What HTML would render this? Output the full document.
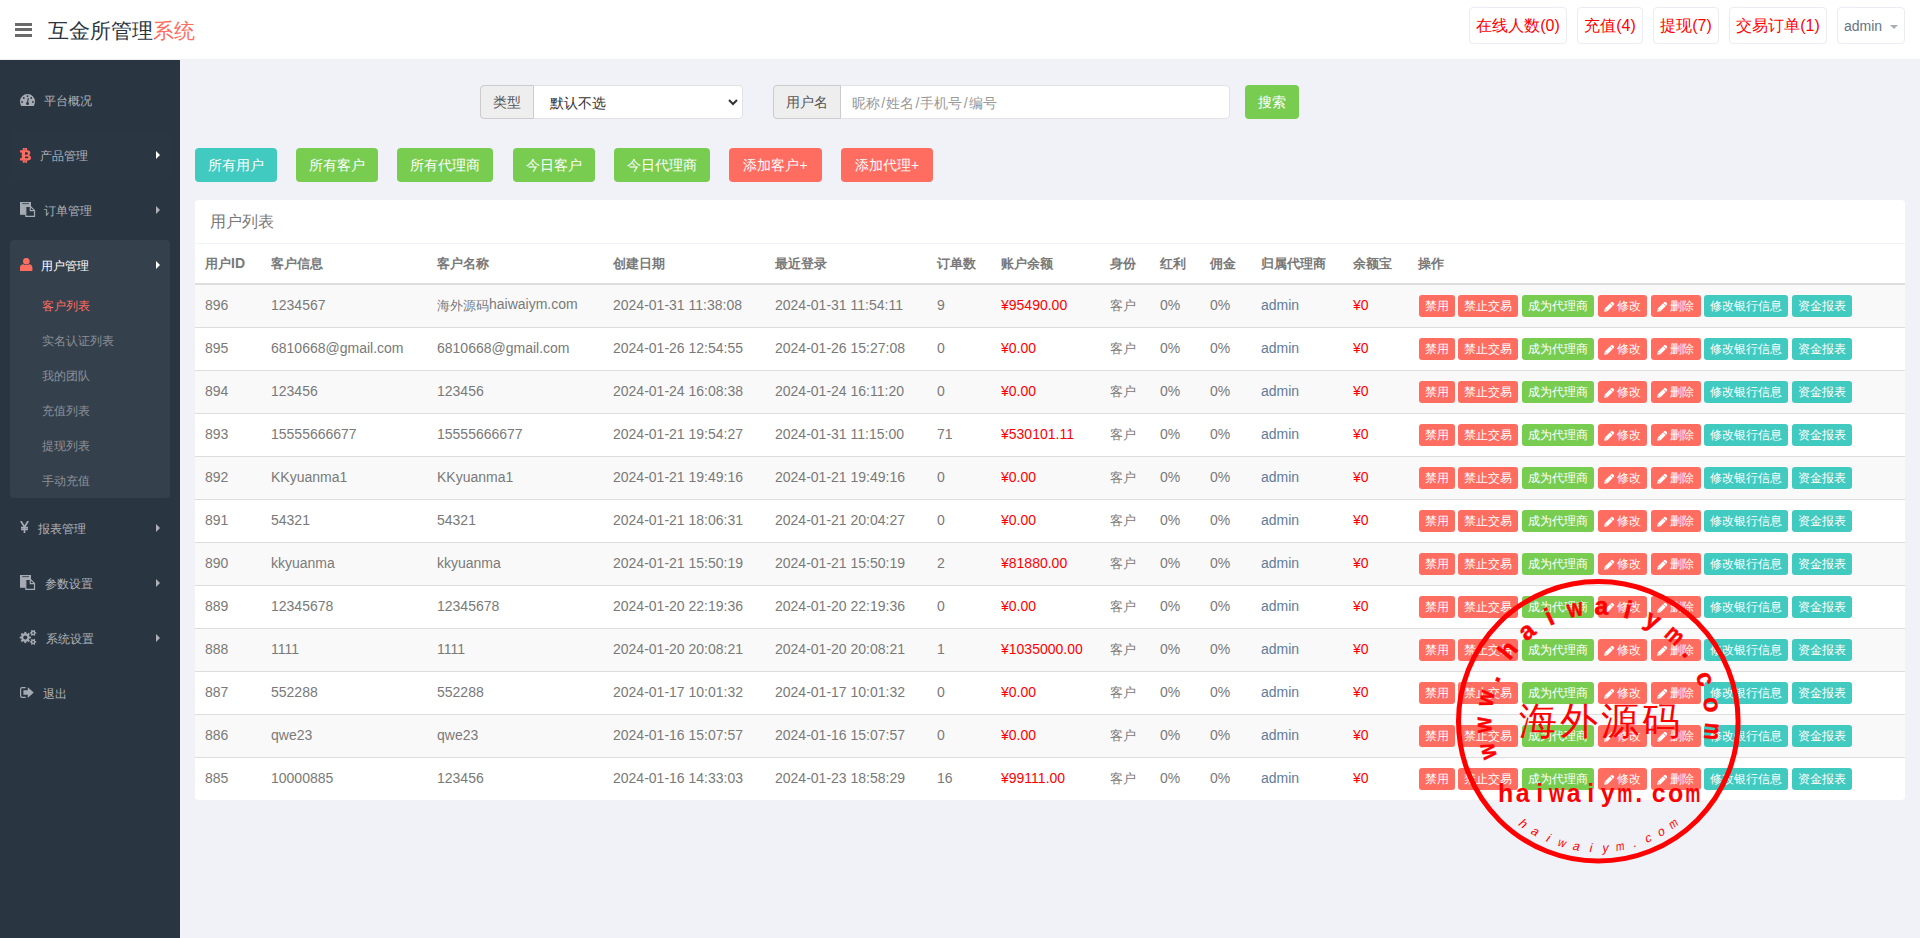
<!DOCTYPE html>
<html><head><meta charset="utf-8">
<style>
*{box-sizing:border-box;margin:0;padding:0}
html,body{width:1920px;height:938px;overflow:hidden}
body{font-family:"Liberation Sans",sans-serif;background:#f1f2f7;color:#797979;font-size:13px;position:relative}
.abs{position:absolute}
.sl{font-style:normal;padding:0 1px 0 1.3px}
/* header */
#hdr{position:absolute;left:0;top:0;width:1920px;height:60px;background:#fff;border-bottom:1px solid #eceef4}
#burger{position:absolute;left:15px;top:23px;width:17px;height:14px}
#burger i{position:absolute;left:0;width:17px;height:3px;background:#6a6a6a}
#logo{position:absolute;left:48px;top:17px;font-size:21px;line-height:28px;color:#2a3542;white-space:nowrap}
#logo span{color:#ff6c60}
.tb{position:absolute;top:7px;height:37px;border:1px solid #ebecf4;border-radius:4px;font-size:16px;line-height:35px;color:#ff0000;text-align:center;white-space:nowrap}
/* sidebar */
#side{position:absolute;left:0;top:60px;width:180px;height:878px;background:#2a3542}
.mi{position:absolute;left:0;width:180px;height:20px;font-size:12px;line-height:20px;color:#aeb2b7;white-space:nowrap}
.mi .t{position:absolute;top:1px}
.mi .ar{position:absolute;left:156px;top:6px;width:0;height:0;border-top:4px solid transparent;border-bottom:4px solid transparent;border-left:4px solid #aeb2b7}
#subbox{position:absolute;left:10px;top:180px;width:160px;height:258px;background:#35404d;border-radius:4px}
/* content */
.btn{position:absolute;height:34px;border-radius:4px;color:#fff;font-size:14px;line-height:34px;text-align:center;white-space:nowrap}
.teal{background:#41cac0}.green{background:#78cd51}.red{background:#ff6c60}
#panel{position:absolute;left:195px;top:200px;width:1710px;height:600px;background:#fff;border-radius:4px;overflow:hidden}
#ph{height:44px;border-bottom:1px solid #eff2f7;padding:0 15px;font-size:16px;line-height:43px;color:#797979}
table{border-collapse:collapse;table-layout:fixed;width:1710px}
th{height:40px;text-align:left;font-weight:bold;font-size:13px;color:#797979;padding:0 0 0 10px;border-bottom:2px solid #ddd;white-space:nowrap}
td{height:43px;padding:0 0 2px 10px;border-top:1px solid #ddd;font-size:14px;color:#797979;white-space:nowrap;vertical-align:middle}
tr.odd td{background:#f9f9f9}
.c{font-size:13px;position:relative;top:1px}
.rd{color:#ff0000}
.lk{color:#617c9b}
.xs{display:inline-block;height:22px;line-height:22px;padding:0 6px;border-radius:3px;color:#fff;font-size:12px;margin-right:4px;vertical-align:middle;position:relative;top:1px}
.ops{white-space:nowrap;font-size:0;padding-left:11px}
</style></head><body>
<div id="hdr">
  <div id="burger"><i style="top:0"></i><i style="top:5px"></i><i style="top:11px"></i></div>
  <div id="logo">互金所管理<span>系统</span></div>
  <div class="tb" style="left:1469px;width:98px">在线人数(0)</div>
  <div class="tb" style="left:1577px;width:66px">充值(4)</div>
  <div class="tb" style="left:1653px;width:66px">提现(7)</div>
  <div class="tb" style="left:1729px;width:98px">交易订单(1)</div>
  <div class="tb" style="left:1837px;width:68px;color:#667487;font-size:14px;line-height:37px">admin <span style="display:inline-block;width:0;height:0;border-left:4px solid transparent;border-right:4px solid transparent;border-top:4px solid #a8adb8;vertical-align:middle;margin-left:4px"></span></div>
</div>
<div id="side">
<div id="subbox"></div>
<svg class="abs" style="left:20px;top:34px" width="15" height="12" viewBox="0 0 15 12"><path d="M7.5 0A7.5 7.5 0 0 0 0 7.5C0 9 .4 10.6 1.2 12H13.8C14.6 10.6 15 9 15 7.5A7.5 7.5 0 0 0 7.5 0Z" fill="#a6abb3"/><g fill="#2a3542"><circle cx="7.5" cy="2.2" r=".9"/><circle cx="3.8" cy="4" r=".9"/><circle cx="11.2" cy="4" r=".9"/><circle cx="2.1" cy="7.9" r=".9"/><circle cx="12.9" cy="7.9" r=".9"/><circle cx="7.5" cy="9.4" r="1.5"/></g><path d="M7.3 9.4L8.4 4.2" stroke="#2a3542" stroke-width="1.1"/></svg>
<div class="mi" style="top:30px"><span class="t" style="left:44px">平台概况</span></div>

<div class="abs" style="left:10px;top:70px;width:160px;height:50px;background:#2b3643;border-radius:3px"></div>
<svg class="abs" style="left:20px;top:88px" width="11" height="15" viewBox="0 0 11 15"><path fill="#ff6c60" fill-rule="evenodd" d="M0 2.2H7.5C9.5 2.2 10.3 3.3 10.3 4.8C10.3 6 9.7 6.8 9 7.3C10.3 7.7 11 8.6 11 10C11 11.6 9.8 12.5 7.8 12.5H0V10.3H1.8V4.4H0Z M5 4.3V6.7H6.8C7.5 6.7 7.9 6.2 7.9 5.5C7.9 4.8 7.5 4.3 6.8 4.3Z M5 8.6V10.3H7.3C8 10.3 8.4 9.9 8.4 9.4C8.4 8.9 8 8.6 7.3 8.6Z"/><path fill="#ff6c60" d="M2.8 0H4.8V2.4H2.8Z M5.2 0H7.1V2.4H5.2Z M2.8 12.3H4.8V14.7H2.8Z M5.2 12.3H7.1V14.7H5.2Z"/></svg>
<div class="mi" style="top:85px;color:#aeb2b7"><span class="t" style="left:40px">产品管理</span><i class="ar" style="border-left-color:#fff"></i></div>

<svg class="abs" style="left:20px;top:142px" width="16" height="16" viewBox="0 0 16 16"><path d="M0 0H11V12.8H0Z" fill="#a6abb3"/><path d="M2.2 1.3H9V2.1H2.2Z" fill="#2a3542"/><path d="M5.8 4.5H10.6L14.5 8.4V14.4H5.8Z" fill="#2a3542" stroke="#a6abb3" stroke-width="1.2"/><path d="M10.3 4.5V8.7H14.5" fill="none" stroke="#a6abb3" stroke-width="1.2"/></svg>
<div class="mi" style="top:140px"><span class="t" style="left:44px">订单管理</span><i class="ar"></i></div>

<svg class="abs" style="left:20px;top:198px" width="13" height="14" viewBox="0 0 13 14"><circle cx="6.3" cy="3.2" r="3.3" fill="#ff6c60"/><path d="M0 13V9.6C0 7.6 1.5 6.4 3.3 6.2C4.2 6.8 5.2 7.1 6.3 7.1C7.4 7.1 8.4 6.8 9.3 6.2C11 6.4 12.4 7.6 12.4 9.6V13Z" fill="#ff6c60"/></svg>
<div class="mi" style="top:195px;color:#fff"><span class="t" style="left:41px">用户管理</span><i class="ar" style="border-left-color:#fff"></i></div>

<div class="mi" style="top:235px;color:#ff6c60"><span class="t" style="left:42px">客户列表</span></div>
<div class="mi" style="top:270px;color:#8b9098"><span class="t" style="left:42px">实名认证列表</span></div>
<div class="mi" style="top:305px;color:#8b9098"><span class="t" style="left:42px">我的团队</span></div>
<div class="mi" style="top:340px;color:#8b9098"><span class="t" style="left:42px">充值列表</span></div>
<div class="mi" style="top:375px;color:#8b9098"><span class="t" style="left:42px">提现列表</span></div>
<div class="mi" style="top:410px;color:#8b9098"><span class="t" style="left:42px">手动充值</span></div>

<svg class="abs" style="left:20px;top:461px" width="9" height="12" viewBox="0 0 9 12"><path d="M.8 0L4.5 6L8.2 0M4.5 6V12M1 6.6H8M1 8.5H8" fill="none" stroke="#a6abb3" stroke-width="1.7"/></svg>
<div class="mi" style="top:458px"><span class="t" style="left:38px">报表管理</span><i class="ar"></i></div>

<svg class="abs" style="left:20px;top:515px" width="16" height="16" viewBox="0 0 16 16"><path d="M0 0H11V12.8H0Z" fill="#a6abb3"/><path d="M2.2 1.3H9V2.1H2.2Z" fill="#2a3542"/><path d="M5.8 4.5H10.6L14.5 8.4V14.4H5.8Z" fill="#2a3542" stroke="#a6abb3" stroke-width="1.2"/><path d="M10.3 4.5V8.7H14.5" fill="none" stroke="#a6abb3" stroke-width="1.2"/></svg>
<div class="mi" style="top:513px"><span class="t" style="left:45px">参数设置</span><i class="ar"></i></div>

<svg class="abs" style="left:19px;top:570px" width="18" height="16" viewBox="0 0 18 16"><g fill="#a6abb3"><circle cx="6.3" cy="7.5" r="4.2"/><rect x="5.35" y="1.90" width="1.9" height="5.60" transform="rotate(0.0 6.3 7.5)"/><rect x="5.35" y="1.90" width="1.9" height="5.60" transform="rotate(45.0 6.3 7.5)"/><rect x="5.35" y="1.90" width="1.9" height="5.60" transform="rotate(90.0 6.3 7.5)"/><rect x="5.35" y="1.90" width="1.9" height="5.60" transform="rotate(135.0 6.3 7.5)"/><rect x="5.35" y="1.90" width="1.9" height="5.60" transform="rotate(180.0 6.3 7.5)"/><rect x="5.35" y="1.90" width="1.9" height="5.60" transform="rotate(225.0 6.3 7.5)"/><rect x="5.35" y="1.90" width="1.9" height="5.60" transform="rotate(270.0 6.3 7.5)"/><rect x="5.35" y="1.90" width="1.9" height="5.60" transform="rotate(315.0 6.3 7.5)"/><circle cx="14.1" cy="2.9" r="2.3"/><rect x="13.50" y="-0.30" width="1.2" height="3.20" transform="rotate(30.0 14.1 2.9)"/><rect x="13.50" y="-0.30" width="1.2" height="3.20" transform="rotate(90.0 14.1 2.9)"/><rect x="13.50" y="-0.30" width="1.2" height="3.20" transform="rotate(150.0 14.1 2.9)"/><rect x="13.50" y="-0.30" width="1.2" height="3.20" transform="rotate(210.0 14.1 2.9)"/><rect x="13.50" y="-0.30" width="1.2" height="3.20" transform="rotate(270.0 14.1 2.9)"/><rect x="13.50" y="-0.30" width="1.2" height="3.20" transform="rotate(330.0 14.1 2.9)"/><circle cx="14.1" cy="11.9" r="2.3"/><rect x="13.50" y="8.70" width="1.2" height="3.20" transform="rotate(30.0 14.1 11.9)"/><rect x="13.50" y="8.70" width="1.2" height="3.20" transform="rotate(90.0 14.1 11.9)"/><rect x="13.50" y="8.70" width="1.2" height="3.20" transform="rotate(150.0 14.1 11.9)"/><rect x="13.50" y="8.70" width="1.2" height="3.20" transform="rotate(210.0 14.1 11.9)"/><rect x="13.50" y="8.70" width="1.2" height="3.20" transform="rotate(270.0 14.1 11.9)"/><rect x="13.50" y="8.70" width="1.2" height="3.20" transform="rotate(330.0 14.1 11.9)"/></g><circle cx="6.3" cy="7.5" r="2.0" fill="#2a3542"/><circle cx="14.1" cy="2.9" r="0.9" fill="#2a3542"/><circle cx="14.1" cy="11.9" r="0.9" fill="#2a3542"/></svg>
<div class="mi" style="top:568px"><span class="t" style="left:46px">系统设置</span><i class="ar"></i></div>

<svg class="abs" style="left:20px;top:627px" width="14" height="11" viewBox="0 0 14 11"><path d="M5.7 .6H2.2Q.6 .6 .6 2.2V8.8Q.6 10.4 2.2 10.4H5.7" fill="none" stroke="#a6abb3" stroke-width="1.2"/><path d="M3.4 3.2H7.8V.2L13.7 5.5L7.8 10.9V7.8H3.4Z" fill="#a6abb3"/></svg>
<div class="mi" style="top:623px"><span class="t" style="left:43px">退出</span></div>
</div>
<!-- SIDEBAR_END -->

<!-- search -->
<div class="abs" style="left:480px;top:85px;width:263px;height:34px;border:1px solid #e2e2e4;border-radius:4px;background:#fff"></div>
<div class="abs" style="left:480px;top:85px;width:54px;height:34px;border:1px solid #ccc;border-radius:4px 0 0 4px;background:#eee;color:#555;font-size:14px;line-height:32px;text-align:center">类型</div>
<div class="abs" style="left:550px;top:86px;height:34px;line-height:34px;font-size:14px;color:#333">默认不选</div>
<svg class="abs" style="left:728px;top:99px" width="10" height="7" viewBox="0 0 10 7"><path d="M1 1L5 5L9 1" fill="none" stroke="#333" stroke-width="2"/></svg>

<div class="abs" style="left:773px;top:85px;width:457px;height:34px;border:1px solid #e2e2e4;border-radius:4px;background:#fff"></div>
<div class="abs" style="left:773px;top:85px;width:68px;height:34px;border:1px solid #ccc;border-radius:4px 0 0 4px;background:#eee;color:#555;font-size:14px;line-height:32px;text-align:center">用户名</div>
<div class="abs" style="left:852px;top:86px;height:34px;line-height:34px;font-size:14px;color:#999">昵称<i class="sl">/</i>姓名<i class="sl">/</i>手机号<i class="sl">/</i>编号</div>
<div class="btn green" style="left:1245px;top:85px;width:54px">搜索</div>

<!-- buttons -->
<div class="btn teal" style="left:195px;top:148px;width:82px">所有用户</div>
<div class="btn green" style="left:296px;top:148px;width:82px">所有客户</div>
<div class="btn green" style="left:397px;top:148px;width:96px">所有代理商</div>
<div class="btn green" style="left:513px;top:148px;width:82px">今日客户</div>
<div class="btn green" style="left:614px;top:148px;width:96px">今日代理商</div>
<div class="btn red" style="left:729px;top:148px;width:93px">添加客户+</div>
<div class="btn red" style="left:841px;top:148px;width:92px">添加代理+</div>

<!-- panel -->
<div id="panel">
<div id="ph">用户列表</div>
<table>
<colgroup><col style="width:66px"><col style="width:166px"><col style="width:176px"><col style="width:162px"><col style="width:162px"><col style="width:64px"><col style="width:109px"><col style="width:50px"><col style="width:50px"><col style="width:51px"><col style="width:92px"><col style="width:65px"><col></colgroup>
<thead><tr><th>用户<span style="font-size:14px">ID</span></th><th>客户信息</th><th>客户名称</th><th>创建日期</th><th>最近登录</th><th>订单数</th><th>账户余额</th><th>身份</th><th>红利</th><th>佣金</th><th>归属代理商</th><th>余额宝</th><th>操作</th></tr></thead>
<tbody>
<tr class="odd"><td>896</td><td>1234567</td><td><span class="c">海外源码</span>haiwaiym.com</td><td>2024-01-31 11:38:08</td><td>2024-01-31 11:54:11</td><td>9</td><td class="rd">¥95490.00</td><td><span class="c">客户</span></td><td>0%</td><td>0%</td><td class="lk">admin</td><td class="rd">¥0</td><td class="ops"><span class="xs red" style="margin-right:3px">禁用</span><span class="xs red">禁止交易</span><span class="xs green">成为代理商</span><span class="xs red"><svg width="11" height="11" viewBox="0 0 11 11" style="vertical-align:-2px;margin-right:2px"><path d="M0.2 10.8L0.8 7.5L7.1 1.2Q8 .3 8.9 1.2L9.8 2.1Q10.7 3 9.8 3.9L3.5 10.2Z" fill="#fff"/><path d="M6.1 2.2L8.8 4.9" stroke="#ff6c60" stroke-width=".7"/><path d="M1.6 8.4L2.6 9.4" stroke="#ff6c60" stroke-width=".8"/></svg>修改</span><span class="xs red" style="padding-right:7px;margin-right:3px"><svg width="11" height="11" viewBox="0 0 11 11" style="vertical-align:-2px;margin-right:2px"><path d="M0.2 10.8L0.8 7.5L7.1 1.2Q8 .3 8.9 1.2L9.8 2.1Q10.7 3 9.8 3.9L3.5 10.2Z" fill="#fff"/><path d="M6.1 2.2L8.8 4.9" stroke="#ff6c60" stroke-width=".7"/><path d="M1.6 8.4L2.6 9.4" stroke="#ff6c60" stroke-width=".8"/></svg>删除</span><span class="xs teal">修改银行信息</span><span class="xs teal">资金报表</span></td></tr>
<tr><td>895</td><td>6810668@gmail.com</td><td>6810668@gmail.com</td><td>2024-01-26 12:54:55</td><td>2024-01-26 15:27:08</td><td>0</td><td class="rd">¥0.00</td><td><span class="c">客户</span></td><td>0%</td><td>0%</td><td class="lk">admin</td><td class="rd">¥0</td><td class="ops"><span class="xs red" style="margin-right:3px">禁用</span><span class="xs red">禁止交易</span><span class="xs green">成为代理商</span><span class="xs red"><svg width="11" height="11" viewBox="0 0 11 11" style="vertical-align:-2px;margin-right:2px"><path d="M0.2 10.8L0.8 7.5L7.1 1.2Q8 .3 8.9 1.2L9.8 2.1Q10.7 3 9.8 3.9L3.5 10.2Z" fill="#fff"/><path d="M6.1 2.2L8.8 4.9" stroke="#ff6c60" stroke-width=".7"/><path d="M1.6 8.4L2.6 9.4" stroke="#ff6c60" stroke-width=".8"/></svg>修改</span><span class="xs red" style="padding-right:7px;margin-right:3px"><svg width="11" height="11" viewBox="0 0 11 11" style="vertical-align:-2px;margin-right:2px"><path d="M0.2 10.8L0.8 7.5L7.1 1.2Q8 .3 8.9 1.2L9.8 2.1Q10.7 3 9.8 3.9L3.5 10.2Z" fill="#fff"/><path d="M6.1 2.2L8.8 4.9" stroke="#ff6c60" stroke-width=".7"/><path d="M1.6 8.4L2.6 9.4" stroke="#ff6c60" stroke-width=".8"/></svg>删除</span><span class="xs teal">修改银行信息</span><span class="xs teal">资金报表</span></td></tr>
<tr class="odd"><td>894</td><td>123456</td><td>123456</td><td>2024-01-24 16:08:38</td><td>2024-01-24 16:11:20</td><td>0</td><td class="rd">¥0.00</td><td><span class="c">客户</span></td><td>0%</td><td>0%</td><td class="lk">admin</td><td class="rd">¥0</td><td class="ops"><span class="xs red" style="margin-right:3px">禁用</span><span class="xs red">禁止交易</span><span class="xs green">成为代理商</span><span class="xs red"><svg width="11" height="11" viewBox="0 0 11 11" style="vertical-align:-2px;margin-right:2px"><path d="M0.2 10.8L0.8 7.5L7.1 1.2Q8 .3 8.9 1.2L9.8 2.1Q10.7 3 9.8 3.9L3.5 10.2Z" fill="#fff"/><path d="M6.1 2.2L8.8 4.9" stroke="#ff6c60" stroke-width=".7"/><path d="M1.6 8.4L2.6 9.4" stroke="#ff6c60" stroke-width=".8"/></svg>修改</span><span class="xs red" style="padding-right:7px;margin-right:3px"><svg width="11" height="11" viewBox="0 0 11 11" style="vertical-align:-2px;margin-right:2px"><path d="M0.2 10.8L0.8 7.5L7.1 1.2Q8 .3 8.9 1.2L9.8 2.1Q10.7 3 9.8 3.9L3.5 10.2Z" fill="#fff"/><path d="M6.1 2.2L8.8 4.9" stroke="#ff6c60" stroke-width=".7"/><path d="M1.6 8.4L2.6 9.4" stroke="#ff6c60" stroke-width=".8"/></svg>删除</span><span class="xs teal">修改银行信息</span><span class="xs teal">资金报表</span></td></tr>
<tr><td>893</td><td>15555666677</td><td>15555666677</td><td>2024-01-21 19:54:27</td><td>2024-01-31 11:15:00</td><td>71</td><td class="rd">¥530101.11</td><td><span class="c">客户</span></td><td>0%</td><td>0%</td><td class="lk">admin</td><td class="rd">¥0</td><td class="ops"><span class="xs red" style="margin-right:3px">禁用</span><span class="xs red">禁止交易</span><span class="xs green">成为代理商</span><span class="xs red"><svg width="11" height="11" viewBox="0 0 11 11" style="vertical-align:-2px;margin-right:2px"><path d="M0.2 10.8L0.8 7.5L7.1 1.2Q8 .3 8.9 1.2L9.8 2.1Q10.7 3 9.8 3.9L3.5 10.2Z" fill="#fff"/><path d="M6.1 2.2L8.8 4.9" stroke="#ff6c60" stroke-width=".7"/><path d="M1.6 8.4L2.6 9.4" stroke="#ff6c60" stroke-width=".8"/></svg>修改</span><span class="xs red" style="padding-right:7px;margin-right:3px"><svg width="11" height="11" viewBox="0 0 11 11" style="vertical-align:-2px;margin-right:2px"><path d="M0.2 10.8L0.8 7.5L7.1 1.2Q8 .3 8.9 1.2L9.8 2.1Q10.7 3 9.8 3.9L3.5 10.2Z" fill="#fff"/><path d="M6.1 2.2L8.8 4.9" stroke="#ff6c60" stroke-width=".7"/><path d="M1.6 8.4L2.6 9.4" stroke="#ff6c60" stroke-width=".8"/></svg>删除</span><span class="xs teal">修改银行信息</span><span class="xs teal">资金报表</span></td></tr>
<tr class="odd"><td>892</td><td>KKyuanma1</td><td>KKyuanma1</td><td>2024-01-21 19:49:16</td><td>2024-01-21 19:49:16</td><td>0</td><td class="rd">¥0.00</td><td><span class="c">客户</span></td><td>0%</td><td>0%</td><td class="lk">admin</td><td class="rd">¥0</td><td class="ops"><span class="xs red" style="margin-right:3px">禁用</span><span class="xs red">禁止交易</span><span class="xs green">成为代理商</span><span class="xs red"><svg width="11" height="11" viewBox="0 0 11 11" style="vertical-align:-2px;margin-right:2px"><path d="M0.2 10.8L0.8 7.5L7.1 1.2Q8 .3 8.9 1.2L9.8 2.1Q10.7 3 9.8 3.9L3.5 10.2Z" fill="#fff"/><path d="M6.1 2.2L8.8 4.9" stroke="#ff6c60" stroke-width=".7"/><path d="M1.6 8.4L2.6 9.4" stroke="#ff6c60" stroke-width=".8"/></svg>修改</span><span class="xs red" style="padding-right:7px;margin-right:3px"><svg width="11" height="11" viewBox="0 0 11 11" style="vertical-align:-2px;margin-right:2px"><path d="M0.2 10.8L0.8 7.5L7.1 1.2Q8 .3 8.9 1.2L9.8 2.1Q10.7 3 9.8 3.9L3.5 10.2Z" fill="#fff"/><path d="M6.1 2.2L8.8 4.9" stroke="#ff6c60" stroke-width=".7"/><path d="M1.6 8.4L2.6 9.4" stroke="#ff6c60" stroke-width=".8"/></svg>删除</span><span class="xs teal">修改银行信息</span><span class="xs teal">资金报表</span></td></tr>
<tr><td>891</td><td>54321</td><td>54321</td><td>2024-01-21 18:06:31</td><td>2024-01-21 20:04:27</td><td>0</td><td class="rd">¥0.00</td><td><span class="c">客户</span></td><td>0%</td><td>0%</td><td class="lk">admin</td><td class="rd">¥0</td><td class="ops"><span class="xs red" style="margin-right:3px">禁用</span><span class="xs red">禁止交易</span><span class="xs green">成为代理商</span><span class="xs red"><svg width="11" height="11" viewBox="0 0 11 11" style="vertical-align:-2px;margin-right:2px"><path d="M0.2 10.8L0.8 7.5L7.1 1.2Q8 .3 8.9 1.2L9.8 2.1Q10.7 3 9.8 3.9L3.5 10.2Z" fill="#fff"/><path d="M6.1 2.2L8.8 4.9" stroke="#ff6c60" stroke-width=".7"/><path d="M1.6 8.4L2.6 9.4" stroke="#ff6c60" stroke-width=".8"/></svg>修改</span><span class="xs red" style="padding-right:7px;margin-right:3px"><svg width="11" height="11" viewBox="0 0 11 11" style="vertical-align:-2px;margin-right:2px"><path d="M0.2 10.8L0.8 7.5L7.1 1.2Q8 .3 8.9 1.2L9.8 2.1Q10.7 3 9.8 3.9L3.5 10.2Z" fill="#fff"/><path d="M6.1 2.2L8.8 4.9" stroke="#ff6c60" stroke-width=".7"/><path d="M1.6 8.4L2.6 9.4" stroke="#ff6c60" stroke-width=".8"/></svg>删除</span><span class="xs teal">修改银行信息</span><span class="xs teal">资金报表</span></td></tr>
<tr class="odd"><td>890</td><td>kkyuanma</td><td>kkyuanma</td><td>2024-01-21 15:50:19</td><td>2024-01-21 15:50:19</td><td>2</td><td class="rd">¥81880.00</td><td><span class="c">客户</span></td><td>0%</td><td>0%</td><td class="lk">admin</td><td class="rd">¥0</td><td class="ops"><span class="xs red" style="margin-right:3px">禁用</span><span class="xs red">禁止交易</span><span class="xs green">成为代理商</span><span class="xs red"><svg width="11" height="11" viewBox="0 0 11 11" style="vertical-align:-2px;margin-right:2px"><path d="M0.2 10.8L0.8 7.5L7.1 1.2Q8 .3 8.9 1.2L9.8 2.1Q10.7 3 9.8 3.9L3.5 10.2Z" fill="#fff"/><path d="M6.1 2.2L8.8 4.9" stroke="#ff6c60" stroke-width=".7"/><path d="M1.6 8.4L2.6 9.4" stroke="#ff6c60" stroke-width=".8"/></svg>修改</span><span class="xs red" style="padding-right:7px;margin-right:3px"><svg width="11" height="11" viewBox="0 0 11 11" style="vertical-align:-2px;margin-right:2px"><path d="M0.2 10.8L0.8 7.5L7.1 1.2Q8 .3 8.9 1.2L9.8 2.1Q10.7 3 9.8 3.9L3.5 10.2Z" fill="#fff"/><path d="M6.1 2.2L8.8 4.9" stroke="#ff6c60" stroke-width=".7"/><path d="M1.6 8.4L2.6 9.4" stroke="#ff6c60" stroke-width=".8"/></svg>删除</span><span class="xs teal">修改银行信息</span><span class="xs teal">资金报表</span></td></tr>
<tr><td>889</td><td>12345678</td><td>12345678</td><td>2024-01-20 22:19:36</td><td>2024-01-20 22:19:36</td><td>0</td><td class="rd">¥0.00</td><td><span class="c">客户</span></td><td>0%</td><td>0%</td><td class="lk">admin</td><td class="rd">¥0</td><td class="ops"><span class="xs red" style="margin-right:3px">禁用</span><span class="xs red">禁止交易</span><span class="xs green">成为代理商</span><span class="xs red"><svg width="11" height="11" viewBox="0 0 11 11" style="vertical-align:-2px;margin-right:2px"><path d="M0.2 10.8L0.8 7.5L7.1 1.2Q8 .3 8.9 1.2L9.8 2.1Q10.7 3 9.8 3.9L3.5 10.2Z" fill="#fff"/><path d="M6.1 2.2L8.8 4.9" stroke="#ff6c60" stroke-width=".7"/><path d="M1.6 8.4L2.6 9.4" stroke="#ff6c60" stroke-width=".8"/></svg>修改</span><span class="xs red" style="padding-right:7px;margin-right:3px"><svg width="11" height="11" viewBox="0 0 11 11" style="vertical-align:-2px;margin-right:2px"><path d="M0.2 10.8L0.8 7.5L7.1 1.2Q8 .3 8.9 1.2L9.8 2.1Q10.7 3 9.8 3.9L3.5 10.2Z" fill="#fff"/><path d="M6.1 2.2L8.8 4.9" stroke="#ff6c60" stroke-width=".7"/><path d="M1.6 8.4L2.6 9.4" stroke="#ff6c60" stroke-width=".8"/></svg>删除</span><span class="xs teal">修改银行信息</span><span class="xs teal">资金报表</span></td></tr>
<tr class="odd"><td>888</td><td>1111</td><td>1111</td><td>2024-01-20 20:08:21</td><td>2024-01-20 20:08:21</td><td>1</td><td class="rd">¥1035000.00</td><td><span class="c">客户</span></td><td>0%</td><td>0%</td><td class="lk">admin</td><td class="rd">¥0</td><td class="ops"><span class="xs red" style="margin-right:3px">禁用</span><span class="xs red">禁止交易</span><span class="xs green">成为代理商</span><span class="xs red"><svg width="11" height="11" viewBox="0 0 11 11" style="vertical-align:-2px;margin-right:2px"><path d="M0.2 10.8L0.8 7.5L7.1 1.2Q8 .3 8.9 1.2L9.8 2.1Q10.7 3 9.8 3.9L3.5 10.2Z" fill="#fff"/><path d="M6.1 2.2L8.8 4.9" stroke="#ff6c60" stroke-width=".7"/><path d="M1.6 8.4L2.6 9.4" stroke="#ff6c60" stroke-width=".8"/></svg>修改</span><span class="xs red" style="padding-right:7px;margin-right:3px"><svg width="11" height="11" viewBox="0 0 11 11" style="vertical-align:-2px;margin-right:2px"><path d="M0.2 10.8L0.8 7.5L7.1 1.2Q8 .3 8.9 1.2L9.8 2.1Q10.7 3 9.8 3.9L3.5 10.2Z" fill="#fff"/><path d="M6.1 2.2L8.8 4.9" stroke="#ff6c60" stroke-width=".7"/><path d="M1.6 8.4L2.6 9.4" stroke="#ff6c60" stroke-width=".8"/></svg>删除</span><span class="xs teal">修改银行信息</span><span class="xs teal">资金报表</span></td></tr>
<tr><td>887</td><td>552288</td><td>552288</td><td>2024-01-17 10:01:32</td><td>2024-01-17 10:01:32</td><td>0</td><td class="rd">¥0.00</td><td><span class="c">客户</span></td><td>0%</td><td>0%</td><td class="lk">admin</td><td class="rd">¥0</td><td class="ops"><span class="xs red" style="margin-right:3px">禁用</span><span class="xs red">禁止交易</span><span class="xs green">成为代理商</span><span class="xs red"><svg width="11" height="11" viewBox="0 0 11 11" style="vertical-align:-2px;margin-right:2px"><path d="M0.2 10.8L0.8 7.5L7.1 1.2Q8 .3 8.9 1.2L9.8 2.1Q10.7 3 9.8 3.9L3.5 10.2Z" fill="#fff"/><path d="M6.1 2.2L8.8 4.9" stroke="#ff6c60" stroke-width=".7"/><path d="M1.6 8.4L2.6 9.4" stroke="#ff6c60" stroke-width=".8"/></svg>修改</span><span class="xs red" style="padding-right:7px;margin-right:3px"><svg width="11" height="11" viewBox="0 0 11 11" style="vertical-align:-2px;margin-right:2px"><path d="M0.2 10.8L0.8 7.5L7.1 1.2Q8 .3 8.9 1.2L9.8 2.1Q10.7 3 9.8 3.9L3.5 10.2Z" fill="#fff"/><path d="M6.1 2.2L8.8 4.9" stroke="#ff6c60" stroke-width=".7"/><path d="M1.6 8.4L2.6 9.4" stroke="#ff6c60" stroke-width=".8"/></svg>删除</span><span class="xs teal">修改银行信息</span><span class="xs teal">资金报表</span></td></tr>
<tr class="odd"><td>886</td><td>qwe23</td><td>qwe23</td><td>2024-01-16 15:07:57</td><td>2024-01-16 15:07:57</td><td>0</td><td class="rd">¥0.00</td><td><span class="c">客户</span></td><td>0%</td><td>0%</td><td class="lk">admin</td><td class="rd">¥0</td><td class="ops"><span class="xs red" style="margin-right:3px">禁用</span><span class="xs red">禁止交易</span><span class="xs green">成为代理商</span><span class="xs red"><svg width="11" height="11" viewBox="0 0 11 11" style="vertical-align:-2px;margin-right:2px"><path d="M0.2 10.8L0.8 7.5L7.1 1.2Q8 .3 8.9 1.2L9.8 2.1Q10.7 3 9.8 3.9L3.5 10.2Z" fill="#fff"/><path d="M6.1 2.2L8.8 4.9" stroke="#ff6c60" stroke-width=".7"/><path d="M1.6 8.4L2.6 9.4" stroke="#ff6c60" stroke-width=".8"/></svg>修改</span><span class="xs red" style="padding-right:7px;margin-right:3px"><svg width="11" height="11" viewBox="0 0 11 11" style="vertical-align:-2px;margin-right:2px"><path d="M0.2 10.8L0.8 7.5L7.1 1.2Q8 .3 8.9 1.2L9.8 2.1Q10.7 3 9.8 3.9L3.5 10.2Z" fill="#fff"/><path d="M6.1 2.2L8.8 4.9" stroke="#ff6c60" stroke-width=".7"/><path d="M1.6 8.4L2.6 9.4" stroke="#ff6c60" stroke-width=".8"/></svg>删除</span><span class="xs teal">修改银行信息</span><span class="xs teal">资金报表</span></td></tr>
<tr><td>885</td><td>10000885</td><td>123456</td><td>2024-01-16 14:33:03</td><td>2024-01-23 18:58:29</td><td>16</td><td class="rd">¥99111.00</td><td><span class="c">客户</span></td><td>0%</td><td>0%</td><td class="lk">admin</td><td class="rd">¥0</td><td class="ops"><span class="xs red" style="margin-right:3px">禁用</span><span class="xs red">禁止交易</span><span class="xs green">成为代理商</span><span class="xs red"><svg width="11" height="11" viewBox="0 0 11 11" style="vertical-align:-2px;margin-right:2px"><path d="M0.2 10.8L0.8 7.5L7.1 1.2Q8 .3 8.9 1.2L9.8 2.1Q10.7 3 9.8 3.9L3.5 10.2Z" fill="#fff"/><path d="M6.1 2.2L8.8 4.9" stroke="#ff6c60" stroke-width=".7"/><path d="M1.6 8.4L2.6 9.4" stroke="#ff6c60" stroke-width=".8"/></svg>修改</span><span class="xs red" style="padding-right:7px;margin-right:3px"><svg width="11" height="11" viewBox="0 0 11 11" style="vertical-align:-2px;margin-right:2px"><path d="M0.2 10.8L0.8 7.5L7.1 1.2Q8 .3 8.9 1.2L9.8 2.1Q10.7 3 9.8 3.9L3.5 10.2Z" fill="#fff"/><path d="M6.1 2.2L8.8 4.9" stroke="#ff6c60" stroke-width=".7"/><path d="M1.6 8.4L2.6 9.4" stroke="#ff6c60" stroke-width=".8"/></svg>删除</span><span class="xs teal">修改银行信息</span><span class="xs teal">资金报表</span></td></tr>
</tbody></table>
</div>

<!-- STAMP --><svg class="abs" style="left:0;top:0;pointer-events:none" width="1920" height="938" viewBox="0 0 1920 938"><circle cx="1598.3" cy="721.3" r="139.8" fill="none" stroke="#f00" stroke-width="5"/><g font-family="Liberation Sans,sans-serif" font-weight="bold" font-size="25" fill="#f00" stroke="#f00" stroke-width="0.5" text-anchor="middle"><text transform="translate(1598.3,721.3) rotate(-105.20) translate(0,-107) scale(0.8,1)">w</text><text transform="translate(1598.3,721.3) rotate(-91.85) translate(0,-107) scale(0.8,1)">w</text><text transform="translate(1598.3,721.3) rotate(-78.50) translate(0,-107) scale(0.8,1)">w</text><text transform="translate(1598.3,721.3) rotate(-67.45) translate(0,-107) scale(1.0,1)">.</text><text transform="translate(1598.3,721.3) rotate(-51.80) translate(0,-107) scale(1.0,1)">h</text><text transform="translate(1598.3,721.3) rotate(-38.45) translate(0,-107) scale(1.0,1)">a</text><text transform="translate(1598.3,721.3) rotate(-25.10) translate(0,-107) scale(1.0,1)">i</text><text transform="translate(1598.3,721.3) rotate(-11.75) translate(0,-107) scale(0.8,1)">w</text><text transform="translate(1598.3,721.3) rotate(1.60) translate(0,-107) scale(1.0,1)">a</text><text transform="translate(1598.3,721.3) rotate(14.95) translate(0,-107) scale(1.0,1)">i</text><text transform="translate(1598.3,721.3) rotate(28.30) translate(0,-107) scale(1.0,1)">y</text><text transform="translate(1598.3,721.3) rotate(41.65) translate(0,-107) scale(0.75,1)">m</text><text transform="translate(1598.3,721.3) rotate(52.70) translate(0,-107) scale(1.0,1)">.</text><text transform="translate(1598.3,721.3) rotate(68.35) translate(0,-107) scale(1.0,1)">c</text><text transform="translate(1598.3,721.3) rotate(81.70) translate(0,-107) scale(1.0,1)">o</text><text transform="translate(1598.3,721.3) rotate(95.05) translate(0,-107) scale(0.75,1)">m</text></g><text x="1601" y="734" font-family="Liberation Sans,sans-serif" font-size="38" font-weight="500" fill="#f00" text-anchor="middle" letter-spacing="3">海外源码</text><g font-family="Liberation Sans,sans-serif" font-weight="bold" font-size="25" fill="#f00" text-anchor="middle"><text transform="translate(1505.75,802) scale(1.0,1)">h</text><text transform="translate(1522.75,802) scale(1.0,1)">a</text><text transform="translate(1539.75,802) scale(1.0,1)">i</text><text transform="translate(1556.75,802) scale(0.8,1)">w</text><text transform="translate(1573.75,802) scale(1.0,1)">a</text><text transform="translate(1590.75,802) scale(1.0,1)">i</text><text transform="translate(1607.75,802) scale(1.0,1)">y</text><text transform="translate(1624.75,802) scale(0.68,1)">m</text><text transform="translate(1638.75,802) scale(1.0,1)">.</text><text transform="translate(1658.75,802) scale(1.0,1)">c</text><text transform="translate(1675.75,802) scale(1.0,1)">o</text><text transform="translate(1692.75,802) scale(0.68,1)">m</text></g><g font-family="Liberation Sans,sans-serif" font-size="12.5" fill="#f00" text-anchor="middle"><text transform="translate(1598.3,721.3) rotate(36.60) translate(0,131) scale(1.0,1) skewX(-11)">h</text><text transform="translate(1598.3,721.3) rotate(30.00) translate(0,131) scale(1.0,1) skewX(-11)">a</text><text transform="translate(1598.3,721.3) rotate(23.40) translate(0,131) scale(1.0,1) skewX(-11)">i</text><text transform="translate(1598.3,721.3) rotate(16.80) translate(0,131) scale(0.85,1) skewX(-11)">w</text><text transform="translate(1598.3,721.3) rotate(10.20) translate(0,131) scale(1.0,1) skewX(-11)">a</text><text transform="translate(1598.3,721.3) rotate(3.60) translate(0,131) scale(1.0,1) skewX(-11)">i</text><text transform="translate(1598.3,721.3) rotate(-3.00) translate(0,131) scale(1.0,1) skewX(-11)">y</text><text transform="translate(1598.3,721.3) rotate(-9.60) translate(0,131) scale(0.82,1) skewX(-11)">m</text><text transform="translate(1598.3,721.3) rotate(-16.20) translate(0,131) scale(1.0,1) skewX(-11)">.</text><text transform="translate(1598.3,721.3) rotate(-22.80) translate(0,131) scale(1.0,1) skewX(-11)">c</text><text transform="translate(1598.3,721.3) rotate(-29.40) translate(0,131) scale(1.0,1) skewX(-11)">o</text><text transform="translate(1598.3,721.3) rotate(-36.00) translate(0,131) scale(0.82,1) skewX(-11)">m</text></g></svg><!-- /STAMP -->
</body></html>
